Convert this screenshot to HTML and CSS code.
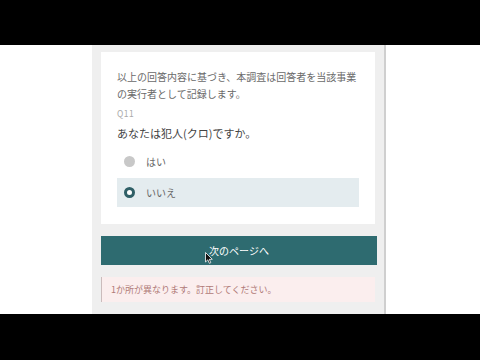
FILE: index.html
```html
<!DOCTYPE html>
<html lang="ja">
<head>
  <meta charset="UTF-8" />
  <title>アンケート</title>
  <link rel="stylesheet" href="styles.css">
</head>
<body>
  <div class="bar"></div>
  <div class="stage">
    <div class="panel">
      <div class="card">
        <p class="lead">以上の回答内容に基づき、本調査は回答者を当該事業の実行者として記録します。</p>
        <div class="qno">Q11</div>
        <div class="question">あなたは犯人(クロ)ですか。</div>
        <label class="option">
          <span class="radio"></span>はい
        </label>
        <label class="option selected">
          <span class="radio"></span>いいえ
        </label>
      </div>
      <button class="next">次のページへ</button>
      <div class="error">1か所が異なります。訂正してください。</div>
    </div>
  </div>
  <div class="bar bottom"></div>
  <!-- mouse pointer in the capture -->
  <svg class="cursor" width="8" height="12" viewBox="0 0 8 12">
    <path d="M0.5 0.5 L0.5 10 L2.8 7.8 L4.4 11.3 L5.8 10.7 L4.3 7.3 L7.3 7.3 Z" fill="#111" stroke="#fff" stroke-width="0.8"/>
  </svg>
</body>
</html>
```

FILE: styles.css
```css
/* BASE */
* {
  margin: 0;
  padding: 0;
  box-sizing: border-box;
}
body {
  position: relative;
  width: 480px;
  height: 360px;
  overflow: hidden;
  background: #fff;
  font-family: "Noto Sans CJK JP", "Noto Sans", sans-serif;
  color: #444;
}
.bar {
  height: 45px;
  background: #000;
}
.bar.bottom {
  height: 46px;
}
.stage {
  height: 269px;
  overflow: hidden;
}
/* PANEL */
.panel {
  margin-left: 92px;
  width: 294px;
  height: 269px;
  background: #efefef;
  border-right: 2px solid #cfcfcf;
  padding: 7px 9px 0 9px;
}
.card {
  background: #fff;
  padding: 16px 16px 17px 16px;
}
.lead {
  font-size: 10px;
  line-height: 17px;
  color: #6a6a6a;
}
.qno {
  font-size: 8.5px;
  color: #aaa;
  margin-top: 5px;
  line-height: 12px;
  letter-spacing: 0.5px;
}
.question {
  font-size: 11px;
  color: #444;
  margin-top: 6px;
  line-height: 16px;
}
/* OPTIONS */
.option {
  display: flex;
  align-items: center;
  gap: 11px;
  height: 29px;
  padding-left: 7px;
  margin-top: 6px;
  font-size: 10px;
  color: #666;
}
.option.selected {
  background: #e4ecef;
  margin-top: 2px;
}
.radio {
  width: 11px;
  height: 11px;
  border-radius: 50%;
  background: #c8c8c8;
}
.option.selected .radio {
  background: #fff;
  border: 3px solid #2f5f66;
}
/* BUTTON & ERROR */
.next {
  display: block;
  width: 276px;
  height: 29px;
  margin-top: 12px;
  border: none;
  background: #2e6b70;
  color: #fff;
  font-family: inherit;
  font-size: 10px;
}
.error {
  margin-top: 12px;
  height: 25px;
  background: #fbeeee;
  border-left: 1px solid #cbbcbc;
  padding-left: 9px;
  font-size: 9px;
  line-height: 25px;
  color: #b07a77;
}
.cursor {
  position: absolute;
  left: 205px;
  top: 252px;
}
```
